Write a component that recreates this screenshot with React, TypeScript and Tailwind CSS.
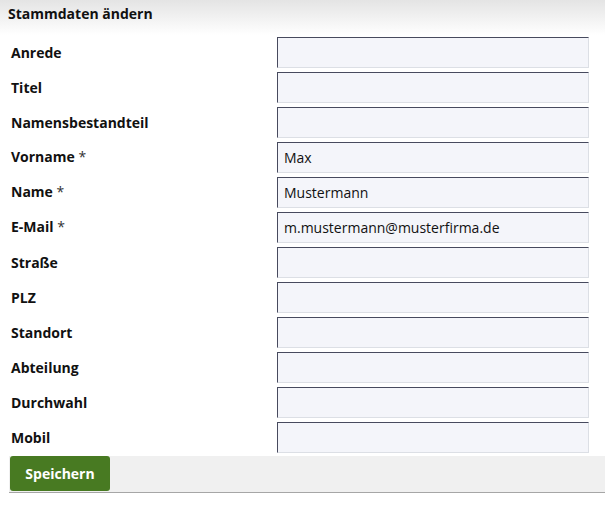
import React from "react";

const rows: { label: string; req?: boolean; value?: string }[] = [
  { label: "Anrede" },
  { label: "Titel" },
  { label: "Namensbestandteil" },
  { label: "Vorname", req: true, value: "Max" },
  { label: "Name", req: true, value: "Mustermann" },
  { label: "E-Mail", req: true, value: "m.mustermann@musterfirma.de" },
  { label: "Straße" },
  { label: "PLZ" },
  { label: "Standort" },
  { label: "Abteilung" },
  { label: "Durchwahl" },
  { label: "Mobil" },
];

export default function App() {
  return (
    <div className="w-[605px] h-[506px] bg-white font-['Open_Sans',sans-serif] text-[#111]">
      <div className="h-[35px] bg-gradient-to-b from-[#e4e4e4] to-white pl-[8px] pt-[4px] text-[14px] leading-[20px] font-bold">
        Stammdaten ändern
      </div>
      {rows.map((r) => (
        <div key={r.label} className="h-[35px] flex items-center">
          <div className={`w-[277px] pl-[11px] text-[14px] font-bold ${r.req ? "-mt-[3px]" : ""}`}>
            {r.label}
            {r.req && <span className="font-normal text-[#333]"> *</span>}
          </div>
          <div className="w-[312px] h-[31px] flex items-center bg-[#f4f5fa] border border-t-[#474a5e] border-l-[#474a5e] border-r-[#dcdfe5] border-b-[#dcdfe5] px-[6px] text-[14px]">
            {r.value ?? ""}
          </div>
        </div>
      ))}
      <div className="ml-[9px] mt-px h-[37px] bg-[#f0f0f0] border-b border-[#a6a6a6] pl-px">
        <button className="w-[100px] h-[35px] rounded-[3px] bg-[#487a22] text-white text-[14px] font-bold">
          Speichern
        </button>
      </div>
    </div>
  );
}
